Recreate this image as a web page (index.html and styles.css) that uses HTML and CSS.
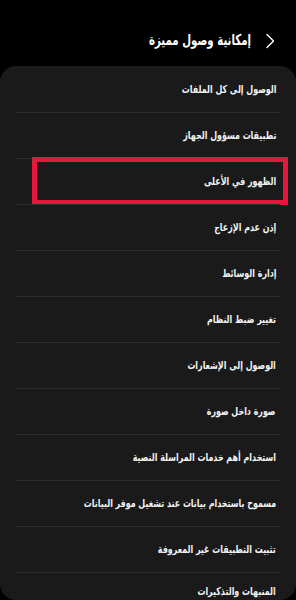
FILE: index.html
```html
<!DOCTYPE html>
<html lang="ar" dir="rtl">
<head>
  <meta charset="UTF-8" />
  <meta name="viewport" content="width=device-width, initial-scale=1.0"/>
  <title>إمكانية وصول مميزة</title>
  <link rel="stylesheet" href="styles.css">
</head>
<body>

  <!-- العنوان -->
  <div class="header">
    <svg class="back" width="10" height="16" viewBox="0 0 10 16">
      <path d="M2 1.5 L8.5 8 L2 14.5" fill="none" stroke="#fff" stroke-width="1.4" stroke-linecap="round" stroke-linejoin="round"/>
    </svg>
    <h1 class="title"><span>إمكانية وصول مميزة</span></h1>
  </div>

  <!-- القائمة -->
  <div class="card">
    <div class="row"><span>الوصول إلى كل الملفات</span></div>
    <div class="row"><span>تطبيقات مسؤول الجهاز</span></div>
    <div class="row"><span>الظهور في الأعلى</span><i class="mark"></i></div>
    <div class="row"><span>إذن عدم الإزعاج</span></div>
    <div class="row"><span>إدارة الوسائط</span></div>
    <div class="row"><span>تغيير ضبط النظام</span></div>
    <div class="row"><span>الوصول إلى الإشعارات</span></div>
    <div class="row"><span>صورة داخل صورة</span></div>
    <div class="row"><span>استخدام أهم خدمات المراسلة النصية</span></div>
    <div class="row"><span>مسموح باستخدام بيانات عند تشغيل موفر البيانات</span></div>
    <div class="row"><span>تثبيت التطبيقات غير المعروفة</span></div>
    <div class="row last"><span>المنبهات والتذكيرات</span></div>
  </div>

</body>
</html>
```

FILE: styles.css
```css
html, body {
  margin: 0;
  padding: 0;
}

body {
  background-color: #000;
  color: #f2f2f2;
  font-family: "DejaVu Sans", sans-serif;
  width: 296px;
  height: 600px;
  overflow: hidden;
}

.header {
  height: 66px;
  display: flex;
  align-items: center;
  padding-top: 13px;
  padding-right: 21px;
  gap: 14px;
  box-sizing: border-box;
}

.back {
  flex: none;
  margin-top: 2px;
}

.title {
  margin: 0;
  font-size: 15px;
  font-weight: bold;
  color: #fff;
  white-space: nowrap;
}

/* الخط أعرض من خط الجهاز، فنضغطه أفقياً */
.title span,
.row span {
  display: inline-block;
  transform-origin: right center;
  white-space: nowrap;
}

.title span {
  transform: scaleX(0.68);
}

.card {
  background-color: #1a1a1a;
  border-radius: 16px;
  height: 534px;
  overflow: hidden;
}

.row {
  position: relative;
  height: 46px;
  margin: 0 16px;
  display: flex;
  align-items: center;
  padding-right: 4px;
  font-size: 11px;
  font-weight: bold;
  border-top: 1px solid #2c2c2c;
  box-sizing: border-box;
}

.row span {
  transform: scaleX(0.72);
}

.row:first-child {
  border-top: none;
}

.row.last {
  align-items: flex-start;
  padding-top: 12px;
}

.mark {
  position: absolute;
  top: -2px;
  bottom: -1px;
  left: 16px;
  right: -8px;
  border: 5px solid #e5173d;
}
```
